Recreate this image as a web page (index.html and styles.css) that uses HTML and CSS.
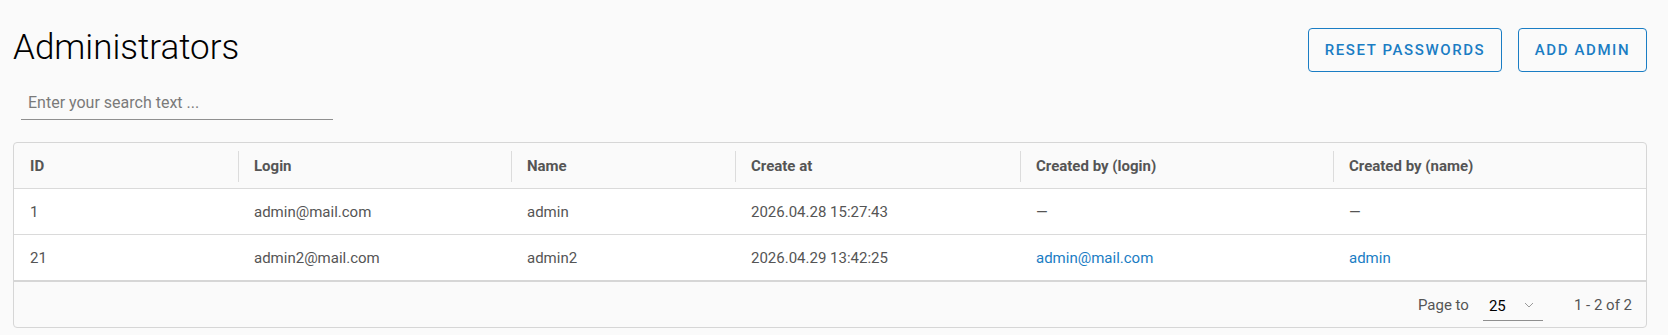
FILE: index.html
```html
<!DOCTYPE html>
<html>
<head>
<meta charset="utf-8">
<link rel="stylesheet" href="styles.css">
</head>
<body>
<div class="page">
  <div class="top">
    <div class="left">
      <h1 class="title">Administrators</h1>
      <div class="search"><input class="search-input" type="text" placeholder="Enter your search text ..."></div>
    </div>
    <div class="actions">
      <button class="btn btn-reset">Reset passwords</button>
      <button class="btn btn-add">Add admin</button>
    </div>
  </div>
  <div class="card">
    <div class="row head">
      <div class="cell">ID</div>
      <div class="cell">Login</div>
      <div class="cell">Name</div>
      <div class="cell">Create at</div>
      <div class="cell">Created by (login)</div>
      <div class="cell">Created by (name)</div>
    </div>
    <div class="row body">
      <div class="cell">1</div>
      <div class="cell">admin@mail.com</div>
      <div class="cell">admin</div>
      <div class="cell">2026.04.28 15:27:43</div>
      <div class="cell">—</div>
      <div class="cell">—</div>
    </div>
    <div class="row body last">
      <div class="cell">21</div>
      <div class="cell">admin2@mail.com</div>
      <div class="cell">admin2</div>
      <div class="cell">2026.04.29 13:42:25</div>
      <div class="cell"><a class="link" href="#">admin@mail.com</a></div>
      <div class="cell"><a class="link" href="#">admin</a></div>
    </div>
    <div class="footer">
      <span class="pg-label">Page to</span>
      <div class="pg-select"><span class="pg-val">25</span><svg class="chev" width="10" height="6" viewBox="0 0 10 6"><path d="M1 1l4 4 4-4" fill="none" stroke="#9a9a9a" stroke-width="1"/></svg></div>
      <span class="pg-range">1 - 2 of 2</span>
    </div>
  </div>
</div>
</body>
</html>
```
FILE: styles.css
```css
* { box-sizing: border-box; }
html, body { margin: 0; padding: 0; background: #fafafa; }
body { font-family: Roboto, "Liberation Sans", sans-serif; color: rgba(0,0,0,0.87); }
.page { padding: 0 21px 0 13px; }
.top { display: flex; justify-content: space-between; align-items: flex-start; }
.left { display: flex; flex-direction: column; }
.title { margin: 28px 0 0 0; font-size: 35px; font-weight: 300; line-height: 40px; color: #000; }
.search { margin: 23px 0 0 8px; width: 312px; }
.search-input { display: block; width: 100%; border: 0; border-bottom: 1px solid #8f8f8f; background: transparent; font-family: Roboto, sans-serif; font-size: 16px; padding: 2px 7px 7px; outline: none; color: #333; }
.search-input::placeholder { color: #7a7a7a; }
.actions { display: flex; gap: 16px; margin-top: 28px; }
.btn { height: 44px; padding: 0; border: 1px solid #1a7dc4; border-radius: 4px; background: transparent; color: #1a7dc4; font-family: Roboto, sans-serif; font-weight: 500; font-size: 15px; letter-spacing: 1.6px; text-transform: uppercase; }
.btn-reset { width: 194px; }
.btn-add { width: 129px; }
.card { margin-top: 22px; border: 1px solid #d6d6d6; border-radius: 4px; background: #fafafa; overflow: hidden; }
.row { display: grid; grid-template-columns: 224px 273px 224px 285px 313px 1fr; }
.head { height: 46px; border-bottom: 1px solid #dadada; }
.body { height: 46px; background: #fff; border-bottom: 1px solid #dadada; }
.body.last { height: 47px; border-bottom: 2px solid #d6d6d6; }
.cell { display: flex; align-items: center; padding: 0 16px; font-size: 15px; color: #555; }
.head .cell { font-weight: 700; font-size: 15px; color: #555; position: relative; }
.head .cell + .cell::before { content: ""; position: absolute; left: 0; top: 8px; bottom: 6px; border-left: 1px solid #dcdcdc; }
.link { color: #1a7dc4; text-decoration: none; }
.footer { height: 45px; display: flex; align-items: center; justify-content: flex-end; padding-right: 14px; font-size: 15px; color: #555; }
.pg-label { margin-right: 14px; }
.pg-select { display: flex; align-items: center; justify-content: space-between; width: 60px; height: 28px; border-bottom: 1px solid #8f8f8f; padding: 0 9px 0 6px; margin-right: 31px; margin-top: 4px; }
.pg-val { color: #000; }
.chev { margin-top: -2px; }
```
